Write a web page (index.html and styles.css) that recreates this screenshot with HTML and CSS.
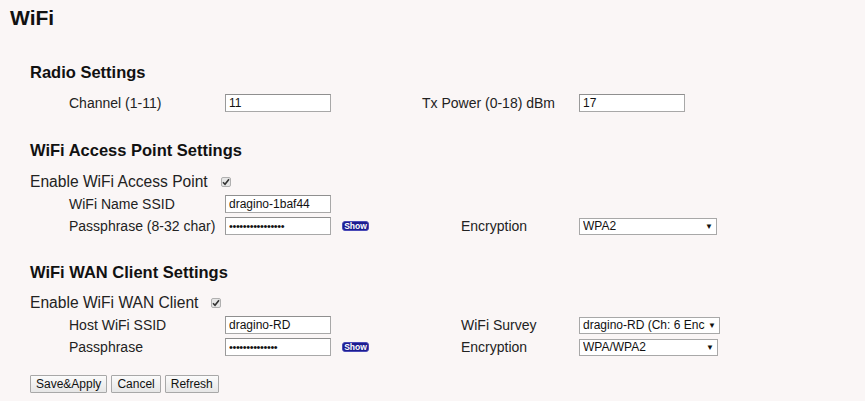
FILE: index.html
```html
<!DOCTYPE html>
<html>
<head>
<meta charset="utf-8">
<title>WiFi</title>
<link rel="stylesheet" href="styles.css">
</head>
<body>
<h1 class="title">WiFi</h1>

<h2 class="sec-title sec-radio">Radio Settings</h2>
<div class="row indent row-radio">
  <span class="lbl">Channel (1-11)</span>
  <input class="txt" type="text" value="11">
  <span class="lbl-tx">Tx Power (0-18) dBm</span>
  <input class="txt" type="text" value="17">
</div>

<h2 class="sec-title sec-ap">WiFi Access Point Settings</h2>
<div class="row enable enable-ap">
  <span class="enable-lbl">Enable WiFi Access Point</span>
  <span class="check"><svg width="8" height="8" viewBox="0 0 8 8"><path d="M1 4.3 L3 6.3 L7 1.2" fill="none" stroke="#333" stroke-width="1.6"/></svg></span>
</div>
<div class="row indent">
  <span class="lbl">WiFi Name SSID</span>
  <input class="txt" type="text" value="dragino-1baf44">
</div>
<div class="row indent">
  <span class="lbl">Passphrase (8-32 char)</span>
  <input class="txt pw" type="password" value="abcdefghijklmnop">
  <span class="aux"><button class="show">Show</button></span>
  <span class="lbl2">Encryption</span>
  <span class="select sel-138"><select><option>WPA2</option></select><span class="arrow">▼</span></span>
</div>

<h2 class="sec-title sec-wan">WiFi WAN Client Settings</h2>
<div class="row enable enable-wan">
  <span class="enable-lbl">Enable WiFi WAN Client</span>
  <span class="check"><svg width="8" height="8" viewBox="0 0 8 8"><path d="M1 4.3 L3 6.3 L7 1.2" fill="none" stroke="#333" stroke-width="1.6"/></svg></span>
</div>
<div class="row indent">
  <span class="lbl">Host WiFi SSID</span>
  <input class="txt" type="text" value="dragino-RD">
  <span class="aux"></span>
  <span class="lbl2">WiFi Survey</span>
  <span class="select sel-140"><select><option>dragino-RD (Ch: 6 Encryption: WPA2)</option></select><span class="arrow">▼</span></span>
</div>
<div class="row indent">
  <span class="lbl">Passphrase</span>
  <input class="txt pw" type="password" value="abcdefghijklmn">
  <span class="aux"><button class="show">Show</button></span>
  <span class="lbl2">Encryption</span>
  <span class="select sel-139"><select><option>WPA/WPA2</option></select><span class="arrow">▼</span></span>
</div>

<div class="actions">
  <button class="btn">Save&amp;Apply</button>
  <button class="btn">Cancel</button>
  <button class="btn">Refresh</button>
</div>
</body>
</html>
```

FILE: styles.css
```css
* { box-sizing: border-box; }
html, body { margin: 0; padding: 0; }
body {
  background: #faf6f6;
  font-family: "Liberation Sans", Arial, sans-serif;
  color: #222;
  width: 865px;
  height: 401px;
  overflow: hidden;
}
.title {
  margin: 6px 0 0 10px;
  font-size: 21px;
  line-height: 24px;
  font-weight: bold;
  color: #111;
}
.sec-title {
  margin: 0 0 0 30px;
  font-size: 16.5px;
  line-height: 20px;
  font-weight: bold;
  color: #111;
}
.sec-radio { margin-top: 32px; }
.sec-ap { margin-top: 26px; }
.sec-wan { margin-top: 25px; }

.row {
  display: flex;
  align-items: center;
  height: 22px;
}
.row-radio { margin-top: 10px; }
.indent { padding-left: 69px; }
.lbl {
  width: 156px;
  font-size: 14px;
  line-height: 18px;
  white-space: nowrap;
}
.lbl-tx {
  margin-left: 91px;
  width: 157px;
  font-size: 14px;
  line-height: 18px;
  white-space: nowrap;
}
.lbl2 {
  width: 118px;
  font-size: 14px;
  line-height: 18px;
  white-space: nowrap;
}
.aux {
  width: 130px;
  display: flex;
  align-items: center;
  padding-left: 11px;
}
.txt {
  width: 106px;
  height: 18px;
  margin: 0;
  padding: 0 3px;
  border: 1px solid #a8a8a8;
  border-top-color: #8f8f8f;
  border-left-color: #999;
  background: #fff;
  font-family: "Liberation Sans", Arial, sans-serif;
  font-size: 12px;
  color: #111;
  outline: none;
}
.pw { font-size: 11px; letter-spacing: -0.4px; }

.enable { padding-left: 30px; }
.enable-ap { margin-top: 11px; }
.enable-wan { margin-top: 10px; }
.enable-lbl {
  font-size: 15.6px;
  line-height: 20px;
  white-space: nowrap;
}
.check {
  margin-left: 13px;
  width: 10px;
  height: 10px;
  border: 1px solid #b0b0b0;
  border-radius: 2px;
  background: #e6e6e6;
  display: flex;
  align-items: center;
  justify-content: center;
}
.check svg { display: block; }

.show {
  width: 27px;
  height: 10px;
  margin: 0;
  padding: 0;
  border: 1px solid #4a4ab8;
  border-radius: 3px;
  background: #1c1c8f;
  color: #fff;
  font-family: "Liberation Sans", Arial, sans-serif;
  font-size: 8.5px;
  font-weight: bold;
  line-height: 8px;
}

.select {
  display: flex;
  align-items: center;
  height: 17px;
  border: 1px solid #a8a8a8;
  background: #fff;
}
.sel-138 { width: 138px; }
.sel-139 { width: 139px; }
.sel-140 { width: 141px; }
.select select {
  -webkit-appearance: none;
  appearance: none;
  flex: 1;
  min-width: 0;
  height: 15px;
  border: 0;
  margin: 0;
  padding: 0 0 0 3px;
  background: transparent;
  font-family: "Liberation Sans", Arial, sans-serif;
  font-size: 12px;
  color: #111;
  outline: none;
}
.arrow {
  width: 14px;
  font-size: 8px;
  color: #111;
  text-align: center;
  line-height: 15px;
}

.actions {
  display: flex;
  gap: 4px;
  margin: 17px 0 0 30px;
}
.btn {
  height: 18px;
  margin: 0;
  padding: 0 5px;
  border: 1px solid #a8a8a8;
  border-radius: 1px;
  background: linear-gradient(#fbfbfb, #e6e6e6);
  font-family: "Liberation Sans", Arial, sans-serif;
  font-size: 12px;
  color: #111;
  line-height: 16px;
}
```
